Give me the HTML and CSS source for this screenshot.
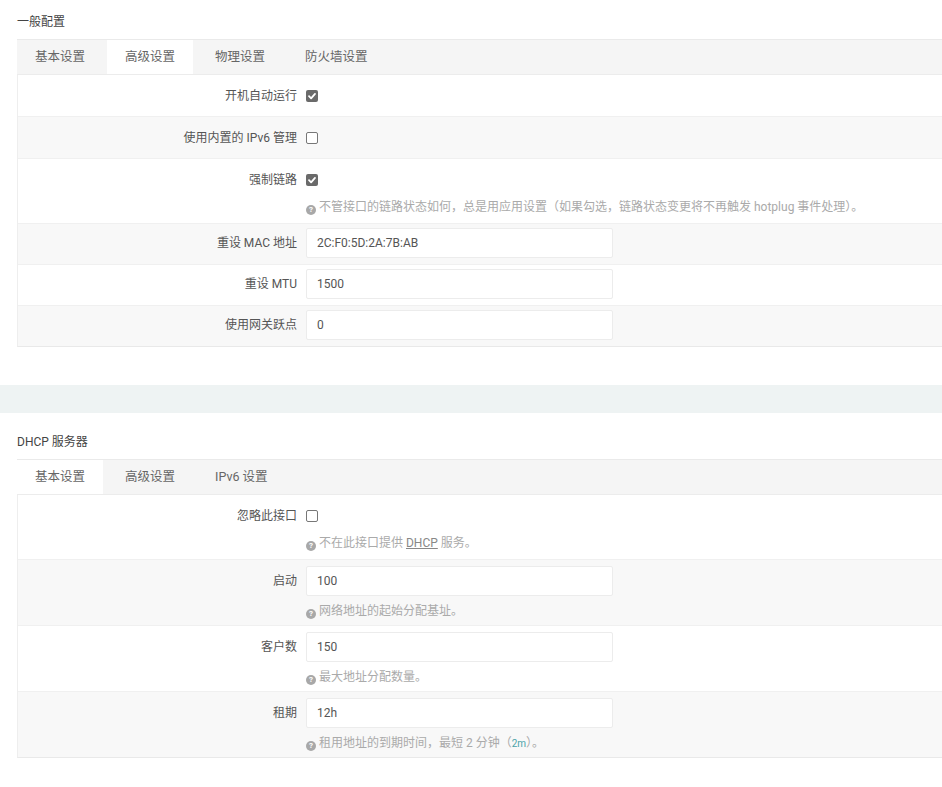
FILE: index.html
```html
<!DOCTYPE html>
<html lang="zh-CN">
<head>
<meta charset="utf-8">
<title>接口配置</title>
<link rel="stylesheet" href="styles.css">
</head>
<body>
<div class="page">
  <section class="cfg first">
    <h3 class="cfg-title">一般配置</h3>
    <div class="panel">
      <ul class="tabs">
        <li class="tab">基本设置</li>
        <li class="tab active">高级设置</li>
        <li class="tab">物理设置</li>
        <li class="tab">防火墙设置</li>
      </ul>
      <div class="row cbrow">
        <div class="label">开机自动运行</div>
        <div class="field"><span class="cb checked"><svg viewBox="0 0 12 12" width="12" height="12"><path d="M3 6.2 L5.1 8.3 L9 3.9" fill="none" stroke="#fff" stroke-width="1.8" stroke-linecap="round" stroke-linejoin="round"/></svg></span></div>
      </div>
      <div class="row cbrow alt">
        <div class="label">使用内置的 IPv6 管理</div>
        <div class="field"><span class="cb"></span></div>
      </div>
      <div class="row cbrow withhelp">
        <div class="label">强制链路</div>
        <div class="field">
          <span class="cb checked"><svg viewBox="0 0 12 12" width="12" height="12"><path d="M3 6.2 L5.1 8.3 L9 3.9" fill="none" stroke="#fff" stroke-width="1.8" stroke-linecap="round" stroke-linejoin="round"/></svg></span>
          <div class="help cbhelp"><span class="qi">?</span>不管接口的链路状态如何，总是用应用设置（如果勾选，链路状态变更将不再触发 hotplug 事件处理）。</div>
        </div>
      </div>
      <div class="row inrow alt">
        <div class="label">重设 MAC 地址</div>
        <div class="field"><div class="input">2C:F0:5D:2A:7B:AB</div></div>
      </div>
      <div class="row inrow">
        <div class="label">重设 MTU</div>
        <div class="field"><div class="input">1500</div></div>
      </div>
      <div class="row inrow alt">
        <div class="label">使用网关跃点</div>
        <div class="field"><div class="input">0</div></div>
      </div>
    </div>
  </section>

  <div class="band"></div>

  <section class="cfg second">
    <h3 class="cfg-title">DHCP 服务器</h3>
    <div class="panel">
      <ul class="tabs">
        <li class="tab active">基本设置</li>
        <li class="tab">高级设置</li>
        <li class="tab">IPv6 设置</li>
      </ul>
      <div class="row cbrow withhelp">
        <div class="label">忽略此接口</div>
        <div class="field">
          <span class="cb"></span>
          <div class="help cbhelp"><span class="qi">?</span>不在此接口提供 <abbr class="abbr">DHCP</abbr> 服务。</div>
        </div>
      </div>
      <div class="row inrow withhelp alt">
        <div class="label">启动</div>
        <div class="field">
          <div class="input">100</div>
          <div class="help"><span class="qi">?</span>网络地址的起始分配基址。</div>
        </div>
      </div>
      <div class="row inrow withhelp">
        <div class="label">客户数</div>
        <div class="field">
          <div class="input">150</div>
          <div class="help"><span class="qi">?</span>最大地址分配数量。</div>
        </div>
      </div>
      <div class="row inrow withhelp alt">
        <div class="label">租期</div>
        <div class="field">
          <div class="input">12h</div>
          <div class="help"><span class="qi">?</span>租用地址的到期时间，最短 2 分钟（<code class="code">2m</code>）。</div>
        </div>
      </div>
    </div>
  </section>
</div>
</body>
</html>
```
FILE: styles.css
```css
html, body {
  margin: 0;
  padding: 0;
  background: #ffffff;
  overflow: hidden;
}

body {
  font-family: Roboto, "Noto Sans CJK SC", sans-serif;
  font-size: 12px;
  color: #555;
}

.page {
  width: 100%;
}

.cfg {
  padding-left: 17px;
  margin-right: -40px;
}

.cfg-title {
  margin: 0 0 8px 0;
  padding-top: 13px;
  font-size: 12px;
  font-weight: normal;
  line-height: 18px;
  color: #444;
}

.second .cfg-title {
  padding-top: 20px;
}

.panel {
  border-left: 1px solid #eeeeee;
  border-bottom: 1px solid #e9e9e9;
}

.tabs {
  list-style: none;
  margin: 0;
  padding: 0;
  display: flex;
  gap: 4px;
  height: 34px;
  background: #f5f5f5;
  border-top: 1px solid #eaeaea;
  border-bottom: 1px solid #ececec;
  margin-left: -1px;
}

.tab {
  padding: 0 18px;
  line-height: 34px;
  font-size: 12.5px;
  color: #666;
}

.tab.active {
  background: #ffffff;
}

.row {
  display: flex;
  align-items: flex-start;
  background: #ffffff;
  border-top: 1px solid #f0f0f0;
}

.tabs + .row {
  border-top: none;
}

.row.alt {
  background: #f8f8f8;
}

.label {
  width: 279px;
  flex: none;
  text-align: right;
  margin-right: 9px;
  color: #555;
}

.field {
  flex: 1;
}

/* checkbox rows */
.cbrow {
  padding: 13px 0 12px;
}

.cbrow.withhelp {
  padding-bottom: 7px;
}

.cbrow .label {
  line-height: 16px;
}

.cb {
  display: block;
  width: 10px;
  height: 10px;
  margin-top: 2px;
  border: 1px solid #777;
  border-radius: 2px;
  background: #fff;
}

.cb.checked {
  width: 12px;
  height: 12px;
  border: none;
  background: #6a6a6a;
}

.cb svg {
  display: block;
}

/* input rows */
.inrow {
  padding: 4px 0 6px;
}

.inrow .label {
  line-height: 30px;
}

.inrow.withhelp {
  padding: 6px 0 5px;
}

.input {
  width: 285px;
  height: 28px;
  line-height: 28px;
  padding: 0 10px;
  border: 1px solid #ececec;
  border-radius: 2px;
  background: #ffffff;
  color: #555;
  font-size: 12px;
}

/* help text */
.help {
  margin-top: 7px;
  line-height: 17px;
  font-size: 12px;
  color: #aaa;
  white-space: nowrap;
}

.cbhelp {
  margin-top: 13px;
}

.qi {
  display: inline-block;
  width: 10px;
  height: 10px;
  margin-right: 3px;
  border-radius: 50%;
  background: #a8a8a8;
  color: #fff;
  font-size: 8px;
  font-weight: bold;
  line-height: 10px;
  text-align: center;
  vertical-align: -0.5px;
}

.abbr {
  text-decoration: underline;
  color: #888;
}

.code {
  font-family: Roboto, sans-serif;
  font-size: 10px;
  color: #4aa3a8;
}

.band {
  height: 28px;
  margin-top: 38px;
  background: #eef3f3;
}
```
